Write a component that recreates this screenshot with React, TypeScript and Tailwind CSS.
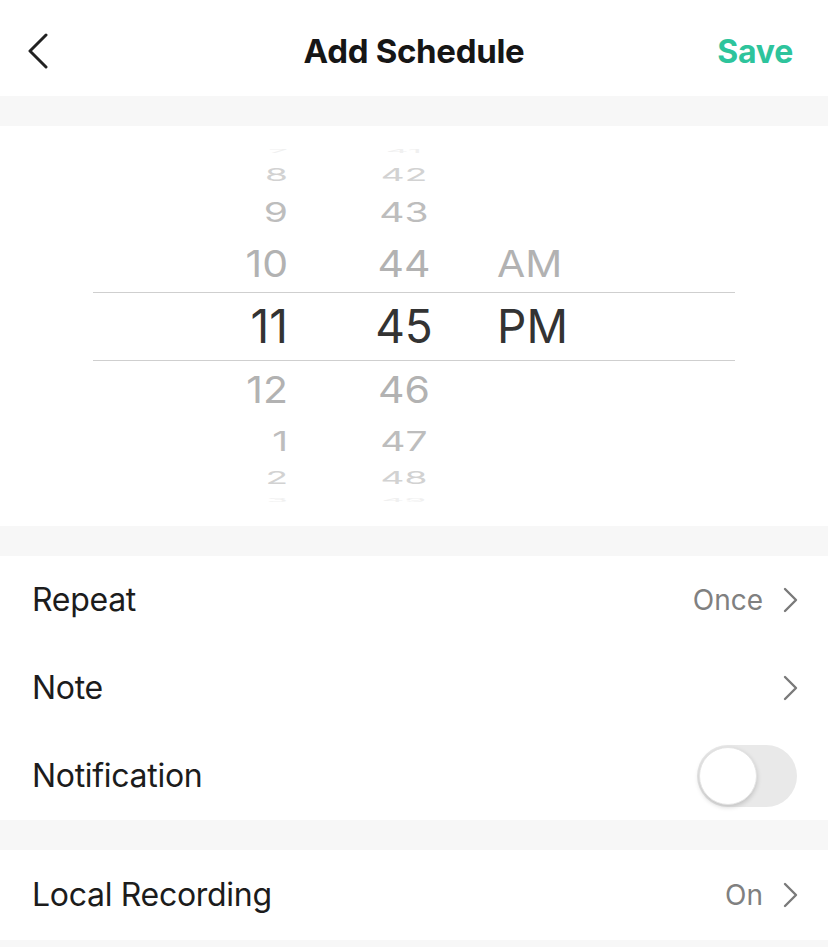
import React from 'react';

type Cell = { text: string; size: number; scale: number; color: string };

const grey = (step: number) =>
  step === 0 ? '#333333' : step === 1 ? '#b2b2b2' : step === 2 ? '#bdbdbd' : step === 3 ? '#d2d2d2' : '#f0f0f0';

const sizeFor = (step: number) => (step === 0 ? 46 : step === 1 ? 41 : step === 2 ? 39 : step === 3 ? 37 : 35);
const scaleFor = (step: number) => (step === 0 ? 1 : step === 1 ? 0.9 : step === 2 ? 0.7 : step === 3 ? 0.48 : 0.15);

// row heights from top partial to bottom partial
const rows = [
  { h: 'h-[18px]', step: 4, hour: '7', min: '41', ap: '' },
  { h: 'h-[28px]', step: 3, hour: '8', min: '42', ap: '' },
  { h: 'h-[46px]', step: 2, hour: '9', min: '43', ap: '' },
  { h: 'h-[57px]', step: 1, hour: '10', min: '44', ap: 'AM' },
  { h: 'h-[69px]', step: 0, hour: '11', min: '45', ap: 'PM' },
  { h: 'h-[57px]', step: 1, hour: '12', min: '46', ap: '' },
  { h: 'h-[46px]', step: 2, hour: '1', min: '47', ap: '' },
  { h: 'h-[28px]', step: 3, hour: '2', min: '48', ap: '' },
  { h: 'h-[18px]', step: 4, hour: '3', min: '49', ap: '' },
];

function WheelText({ text, step }: { text: string; step: number }) {
  const c: Cell = { text, size: sizeFor(step), scale: scaleFor(step), color: grey(step) };
  return (
    <span
      className="inline-block leading-none"
      style={{ fontSize: c.size, color: c.color, transform: `scaleY(${c.scale})` }}
    >
      {c.text}
    </span>
  );
}

function Chevron({ className }: { className?: string }) {
  return (
    <svg width="16" height="26" viewBox="0 0 16 26" fill="none" className={className}>
      <path d="M2 2l11 11L2 24" stroke="#7a7a7a" strokeWidth="2.4" strokeLinecap="round" strokeLinejoin="round" />
    </svg>
  );
}

function Row({ label, h = 'h-[88px]', children }: { label: string; h?: string; children?: React.ReactNode }) {
  return (
    <div className={`flex items-center justify-between ${h} pl-[32px] pr-[29px]`}>
      <span className="text-[32px] text-[#1c1c1c] tracking-[-0.3px]">{label}</span>
      <div className="flex items-center gap-[20px]">{children}</div>
    </div>
  );
}

export default function App() {
  return (
    <div className="w-[828px] h-[947px] bg-[#f7f7f7] overflow-hidden font-['Inter',sans-serif]">
      {/* Header */}
      <header className="relative flex items-center justify-between h-[96px] bg-white pt-[8px] pl-[27px] pr-[35px]">
        <svg width="22" height="36" viewBox="0 0 22 36" fill="none" className="-mt-[2px]">
          <path d="M19 2L3 18l16 16" stroke="#222" strokeWidth="3" strokeLinecap="round" strokeLinejoin="round" />
        </svg>
        <h1 className="absolute left-0 right-0 text-center text-[33px] font-bold text-[#161616] tracking-[-0.3px] pointer-events-none">
          Add Schedule
        </h1>
        <button className="text-[32px] font-bold text-[#2ec49c] tracking-[-0.2px]">Save</button>
      </header>

      <div className="h-[30px]" />

      {/* Time picker */}
      <section className="h-[400px] bg-white flex flex-col justify-center">
        <div className="mx-[93px] flex flex-col">
          {rows.map((r) => (
            <div
              key={r.hour}
              className={`flex items-center overflow-hidden ${r.h} ${r.step === 0 ? 'border-y border-[#cfcfcf]' : ''}`}
            >
              <div className="w-[195px] text-right">
                <WheelText text={r.hour} step={r.step} />
              </div>
              <div className="w-[100px] ml-[66px] text-center">
                <WheelText text={r.min} step={r.step} />
              </div>
              <div className="ml-[43px]">{r.ap && <WheelText text={r.ap} step={r.step === 0 ? 0 : 1} />}</div>
            </div>
          ))}
        </div>
      </section>

      <div className="h-[30px]" />

      {/* Options */}
      <section className="bg-white">
        <Row label="Repeat">
          <span className="text-[28px] text-[#808080]">Once</span>
          <Chevron />
        </Row>
        <Row label="Note">
          <Chevron />
        </Row>
        <Row label="Notification">
          <div className="relative w-[100px] h-[62px] rounded-full bg-[#e9e9e9] mr-[2px]">
            <div className="absolute left-[2px] top-[2px] w-[58px] h-[58px] rounded-full bg-white shadow-[0_2px_5px_rgba(0,0,0,0.18)] border border-[#e4e4e4]" />
          </div>
        </Row>
      </section>

      <div className="h-[30px]" />

      <section className="bg-white">
        <Row label="Local Recording" h="h-[90px]">
          <span className="text-[28px] text-[#808080]">On</span>
          <Chevron />
        </Row>
      </section>
    </div>
  );
}
